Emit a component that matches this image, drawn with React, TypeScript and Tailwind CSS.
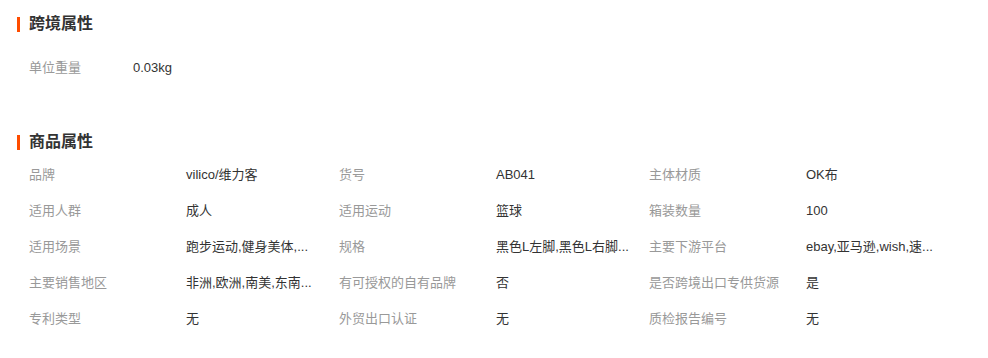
const font = { fontFamily: '"Liberation Sans", "Noto Sans CJK SC", sans-serif' }

const attrs: [string, string][] = [
  ['品牌', 'vilico/维力客'],
  ['货号', 'AB041'],
  ['主体材质', 'OK布'],
  ['适用人群', '成人'],
  ['适用运动', '篮球'],
  ['箱装数量', '100'],
  ['适用场景', '跑步运动,健身美体,...'],
  ['规格', '黑色L左脚,黑色L右脚...'],
  ['主要下游平台', 'ebay,亚马逊,wish,速...'],
  ['主要销售地区', '非洲,欧洲,南美,东南...'],
  ['有可授权的自有品牌', '否'],
  ['是否跨境出口专供货源', '是'],
  ['专利类型', '无'],
  ['外贸出口认证', '无'],
  ['质检报告编号', '无'],
]

function Heading({ title }: { title: string }) {
  return (
    <div className="flex items-center h-5 gap-[9px]">
      <span className="w-[3px] h-[15px] bg-[#ff4d00]" />
      <h3 className="text-[16px] font-bold text-[#333] leading-5">{title}</h3>
    </div>
  )
}

export default function App() {
  return (
    <div className="w-[988px] h-[358px] bg-white pl-[17px] pt-[14px]" style={font}>
      <Heading title="跨境属性" />
      <div className="flex items-center h-9 mt-4 pl-3 text-[13px]">
        <span className="w-[104px] text-[#999]">单位重量</span>
        <span className="text-[#333]">0.03kg</span>
      </div>

      <div className="mt-[46px]">
        <Heading title="商品属性" />
      </div>
      <div className="grid grid-cols-[310px_310px_310px] pl-3 mt-[5px] text-[13px]">
        {attrs.map(([k, v]) => (
          <div key={k} className="flex items-center h-9">
            <span className="w-[157px] shrink-0 text-[#999] whitespace-nowrap">{k}</span>
            <span className="text-[#333] whitespace-nowrap">{v}</span>
          </div>
        ))}
      </div>
    </div>
  )
}
